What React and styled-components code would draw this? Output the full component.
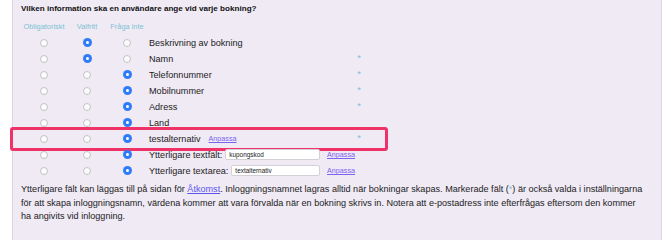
import React from 'react';
import styled, { createGlobalStyle } from 'styled-components';

const GlobalStyle = createGlobalStyle`
  html, body {
    margin: 0;
    padding: 0;
    background: #ffffff;
    overflow: hidden;
  }
  body {
    font-family: "Liberation Sans", Arial, Helvetica, sans-serif;
    color: #1f1f1f;
  }
`;

const Page = styled.div`
  padding-left: 12px;
  width: 650px;
`;

const Panel = styled.div`
  background: #f0eaf5;
  border-left: 1px solid #dcd5e2;
  border-right: 1px solid #dcd5e2;
  padding: 2px 9px 0 8px;
  min-height: 240px;
  box-sizing: border-box;
`;

const Heading = styled.div`
  font-size: 8.1px;
  font-weight: bold;
  line-height: 14px;
  color: #111;
  margin-bottom: 1.7px;
`;

const Row = styled.div`
  position: relative;
  display: grid;
  grid-template-columns: 46px 40px 40px 208px 8px;
  align-items: center;
  height: ${p => (p.$head ? '17px' : '16px')};

  ${p => p.$highlight && `
    &::after {
      content: '';
      position: absolute;
      left: -11px;
      width: 378px;
      top: -4px;
      bottom: -4px;
      border: 3px solid #ef3268;
      border-radius: 3px;
      box-sizing: border-box;
      pointer-events: none;
    }
  `}
`;

const HeadCell = styled.div`
  font-size: 7.4px;
  color: #7cc2d3;
  text-align: center;
  white-space: nowrap;
`;

const RadioCell = styled.div`
  display: flex;
  justify-content: center;
  align-items: center;
`;

const Radio = styled.span`
  position: relative;
  box-sizing: border-box;
  border-radius: 50%;
  width: ${p => (p.$checked ? '9px' : '8px')};
  height: ${p => (p.$checked ? '9px' : '8px')};
  background: ${p => (p.$checked ? '#2f7cf6' : '#fbfbfc')};
  border: ${p => (p.$checked ? 'none' : '1px solid #c3c1c6')};

  ${p => p.$checked && `
    &::after {
      content: '';
      position: absolute;
      left: 3px;
      top: 3px;
      width: 3px;
      height: 3px;
      border-radius: 50%;
      background: #ffffff;
    }
  `}
`;

const LabelCell = styled.div`
  display: flex;
  align-items: center;
  padding-left: 2px;
  font-size: 9.1px;
  color: #222;
  white-space: nowrap;
`;

const FieldInput = styled.span`
  display: inline-flex;
  align-items: center;
  box-sizing: border-box;
  width: ${p => p.$width}px;
  height: 11px;
  margin-left: 3px;
  padding-left: 3px;
  background: #ffffff;
  border: 1px solid #d4d0d8;
  border-radius: 2px;
  font-size: 6.4px;
  color: #222;
`;

const Customize = styled.a`
  font-size: 7.2px;
  color: #7b63f2;
  text-decoration: underline;
  margin-left: ${p => p.$gap}px;
  cursor: pointer;
`;

const Star = styled.div`
  font-size: 9.5px;
  color: #7fc4d4;
  text-align: center;
  line-height: 16px;
  transform: translateY(-1px);
`;

const Note = styled.p`
  margin: 4.5px 0 0;
  width: 624px;
  font-size: 9.1px;
  line-height: 13.5px;
  color: #222;
`;

const NoteLink = styled.a`
  color: #5b55ee;
  text-decoration: underline;
`;

const NoteStar = styled.span`
  color: #7fc4d4;
`;

const rows = [
  { label: 'Beskrivning av bokning', choice: 1 },
  { label: 'Namn', choice: 1, star: true },
  { label: 'Telefonnummer', choice: 2, star: true },
  { label: 'Mobilnummer', choice: 2, star: true },
  { label: 'Adress', choice: 2, star: true },
  { label: 'Land', choice: 2 },
  { label: 'testalternativ', choice: 2, star: true, custom: true, highlight: true },
  { label: 'Ytterligare textfält:', choice: 2, input: 'kupongskod', inputWidth: 111 },
  { label: 'Ytterligare textarea:', choice: 2, input: 'textalternativ', inputWidth: 111 },
];

const App = () => {
  return (
    <>
      <GlobalStyle />
      <Page>
        <Panel>
          <Heading>Vilken information ska en användare ange vid varje bokning?</Heading>
          <Row $head>
            <HeadCell>Obligatoriskt</HeadCell>
            <HeadCell>Valfritt</HeadCell>
            <HeadCell>Fråga inte</HeadCell>
          </Row>
          {rows.map((row) => (
            <Row key={row.label} $highlight={row.highlight}>
              {[0, 1, 2].map((i) => (
                <RadioCell key={i}>
                  <Radio $checked={row.choice === i} />
                </RadioCell>
              ))}
              <LabelCell>
                {row.label}
                {row.custom && <Customize $gap={8}>Anpassa</Customize>}
                {row.input && (
                  <>
                    <FieldInput $width={row.inputWidth}>{row.input}</FieldInput>
                    <Customize $gap={7}>Anpassa</Customize>
                  </>
                )}
              </LabelCell>
              <Star>{row.star ? '*' : ''}</Star>
            </Row>
          ))}
          <Note>
            Ytterligare fält kan läggas till på sidan för <NoteLink>Åtkomst</NoteLink>. Inloggningsnamnet
            lagras alltid när bokningar skapas. Markerade fält (<NoteStar>*</NoteStar>) är också valda i
            inställningarna för att skapa inloggningsnamn, värdena kommer att vara förvalda när en bokning
            skrivs in. Notera att e-postadress inte efterfrågas eftersom den kommer ha angivits vid inloggning.
          </Note>
        </Panel>
      </Page>
    </>
  );
};

export default App;
